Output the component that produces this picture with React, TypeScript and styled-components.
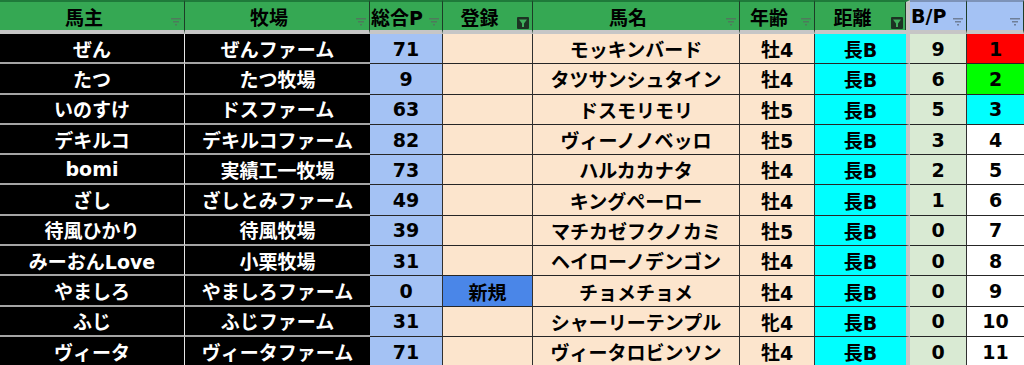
import React from 'react'
import styled, { createGlobalStyle } from 'styled-components'

const GlobalStyle = createGlobalStyle`
  html, body {
    margin: 0;
    padding: 0;
    background: #ffffff;
    overflow: hidden;
  }
  body {
    font-family: "DejaVu Sans", "Noto Sans CJK JP", sans-serif;
  }
`

interface Entry {
  owner: string
  farm: string
  point: number
  entry?: string
  horse: string
  age: string
  dist: string
  bp: number
  rank: number
}

const entries: Entry[] = [
  { owner: 'ぜん', farm: 'ぜんファーム', point: 71, horse: 'モッキンバード', age: '牡4', dist: '長B', bp: 9, rank: 1 },
  { owner: 'たつ', farm: 'たつ牧場', point: 9, horse: 'タツサンシュタイン', age: '牡4', dist: '長B', bp: 6, rank: 2 },
  { owner: 'いのすけ', farm: 'ドスファーム', point: 63, horse: 'ドスモリモリ', age: '牡5', dist: '長B', bp: 5, rank: 3 },
  { owner: 'デキルコ', farm: 'デキルコファーム', point: 82, horse: 'ヴィーノノベッロ', age: '牡5', dist: '長B', bp: 3, rank: 4 },
  { owner: 'bomi', farm: '実績工一牧場', point: 73, horse: 'ハルカカナタ', age: '牡4', dist: '長B', bp: 2, rank: 5 },
  { owner: 'ざし', farm: 'ざしとみファーム', point: 49, horse: 'キングペーロー', age: '牡4', dist: '長B', bp: 1, rank: 6 },
  { owner: '待風ひかり', farm: '待風牧場', point: 39, horse: 'マチカゼフクノカミ', age: '牡5', dist: '長B', bp: 0, rank: 7 },
  { owner: 'みーおんLove', farm: '小栗牧場', point: 31, horse: 'ヘイローノデンゴン', age: '牡4', dist: '長B', bp: 0, rank: 8 },
  { owner: 'やましろ', farm: 'やましろファーム', point: 0, entry: '新規', horse: 'チョメチョメ', age: '牡4', dist: '長B', bp: 0, rank: 9 },
  { owner: 'ふじ', farm: 'ふじファーム', point: 31, horse: 'シャーリーテンプル', age: '牝4', dist: '長B', bp: 0, rank: 10 },
  { owner: 'ヴィータ', farm: 'ヴィータファーム', point: 71, horse: 'ヴィータロビンソン', age: '牡4', dist: '長B', bp: 0, rank: 11 },
]

const rankColor = (rank: number) => {
  if (rank === 1) return '#ff0000'
  if (rank === 2) return '#00ff00'
  if (rank === 3) return '#00ffff'
  return '#ffffff'
}

const Sheet = styled.div`
  display: grid;
  grid-template-columns: 185px 185px 73px 90px 207px 75px 95px 57px 57px;
  grid-template-rows: 34px;
  grid-auto-rows: 30.3px;
  width: 1024px;
  height: 365px;
  overflow: hidden;
`

const HeadCell = styled.div<{ $blue?: boolean; $left?: boolean; $freeze?: boolean }>`
  position: relative;
  display: flex;
  align-items: center;
  justify-content: ${p => (p.$left ? 'flex-start' : 'center')};
  padding: 0 16px 0 ${p => (p.$left ? '1px' : '0')};
  box-sizing: border-box;
  background: ${p => (p.$blue ? '#a4c2f4' : '#35a853')};
  border-top: 2px solid ${p => (p.$blue ? '#7d93b8' : '#1f7a3a')};
  border-bottom: 4px solid #c6c6c6;
  border-right: ${p => (p.$freeze ? '4px solid #c6c6c6' : '1px solid #1d3d27')};
  box-shadow: ${p => (p.$freeze ? 'inset -1px 0 0 #1d3d27' : 'none')};
  color: #000;
  font-size: 19px;
  font-weight: bold;
  white-space: nowrap;
`

const FilterSlot = styled.span<{ $active?: boolean }>`
  position: absolute;
  right: 3px;
  top: ${p => (p.$active ? '15px' : '16px')};
  display: flex;
  line-height: 0;
`

const DarkCell = styled.div<{ $edge?: boolean }>`
  display: flex;
  align-items: center;
  justify-content: center;
  box-sizing: border-box;
  background: #000;
  color: #fff;
  border-bottom: 2px solid #a4a4a4;
  border-right: ${p => (p.$edge ? '1px solid #e6e6e6' : 'none')};
  font-size: 19px;
  font-weight: bold;
  white-space: nowrap;
`

const Cell = styled.div<{ $bg: string; $freeze?: boolean; $edge?: boolean }>`
  display: flex;
  align-items: center;
  justify-content: center;
  box-sizing: border-box;
  background: ${p => p.$bg};
  color: #000;
  border-bottom: 1px solid #262626;
  border-right: ${p => (p.$freeze ? '4px solid #c6c6c6' : p.$edge ? '1px solid #303030' : 'none')};
  font-size: 19px;
  font-weight: bold;
  white-space: nowrap;
  overflow: hidden;
`

const FilterIcon = ({ blue }: { blue?: boolean }) => (
  <svg width="10" height="8" viewBox="0 0 10 8">
    <g fill={blue ? '#6f7f98' : '#4f7a5c'}>
      <rect x="0" y="0" width="10" height="1.5" />
      <rect x="2" y="3" width="6" height="1.5" />
      <rect x="4" y="6" width="2" height="1.5" />
    </g>
  </svg>
)

const ActiveFilterIcon = () => (
  <svg width="12" height="12" viewBox="0 0 12 12">
    <rect x="0" y="0" width="12" height="12" rx="1" fill="#1c3323" />
    <path d="M2 2.5 H10 L7 6.5 V10 H5 V6.5 Z" fill="#3fae5c" />
  </svg>
)

type Head = { label: string; blue?: boolean; left?: boolean; freeze?: boolean; active?: boolean }

const heads: Head[] = [
  { label: '馬主' },
  { label: '牧場' },
  { label: '総合P', left: true },
  { label: '登録', active: true },
  { label: '馬名' },
  { label: '年齢' },
  { label: '距離', active: true, freeze: true },
  { label: 'B/P', blue: true, left: true },
  { label: '', blue: true },
]

export default function App() {
  return (
    <>
      <GlobalStyle />
      <Sheet>
        {heads.map((h, i) => (
          <HeadCell key={i} $blue={h.blue} $left={h.left} $freeze={h.freeze}>
            {h.label}
            <FilterSlot $active={h.active}>
              {h.active ? <ActiveFilterIcon /> : <FilterIcon blue={h.blue} />}
            </FilterSlot>
          </HeadCell>
        ))}
        {entries.map(e => (
          <React.Fragment key={e.rank}>
            <DarkCell $edge>{e.owner}</DarkCell>
            <DarkCell>{e.farm}</DarkCell>
            <Cell $bg="#a4c2f4" $edge>{e.point}</Cell>
            <Cell $bg={e.entry ? '#4a86e8' : '#fce5cd'} $edge>{e.entry}</Cell>
            <Cell $bg="#fce5cd" $edge>{e.horse}</Cell>
            <Cell $bg="#fce5cd" $edge>{e.age}</Cell>
            <Cell $bg="#00ffff" $freeze>{e.dist}</Cell>
            <Cell $bg="#d9ead3" $edge>{e.bp}</Cell>
            <Cell $bg={rankColor(e.rank)}>{e.rank}</Cell>
          </React.Fragment>
        ))}
      </Sheet>
    </>
  )
}
